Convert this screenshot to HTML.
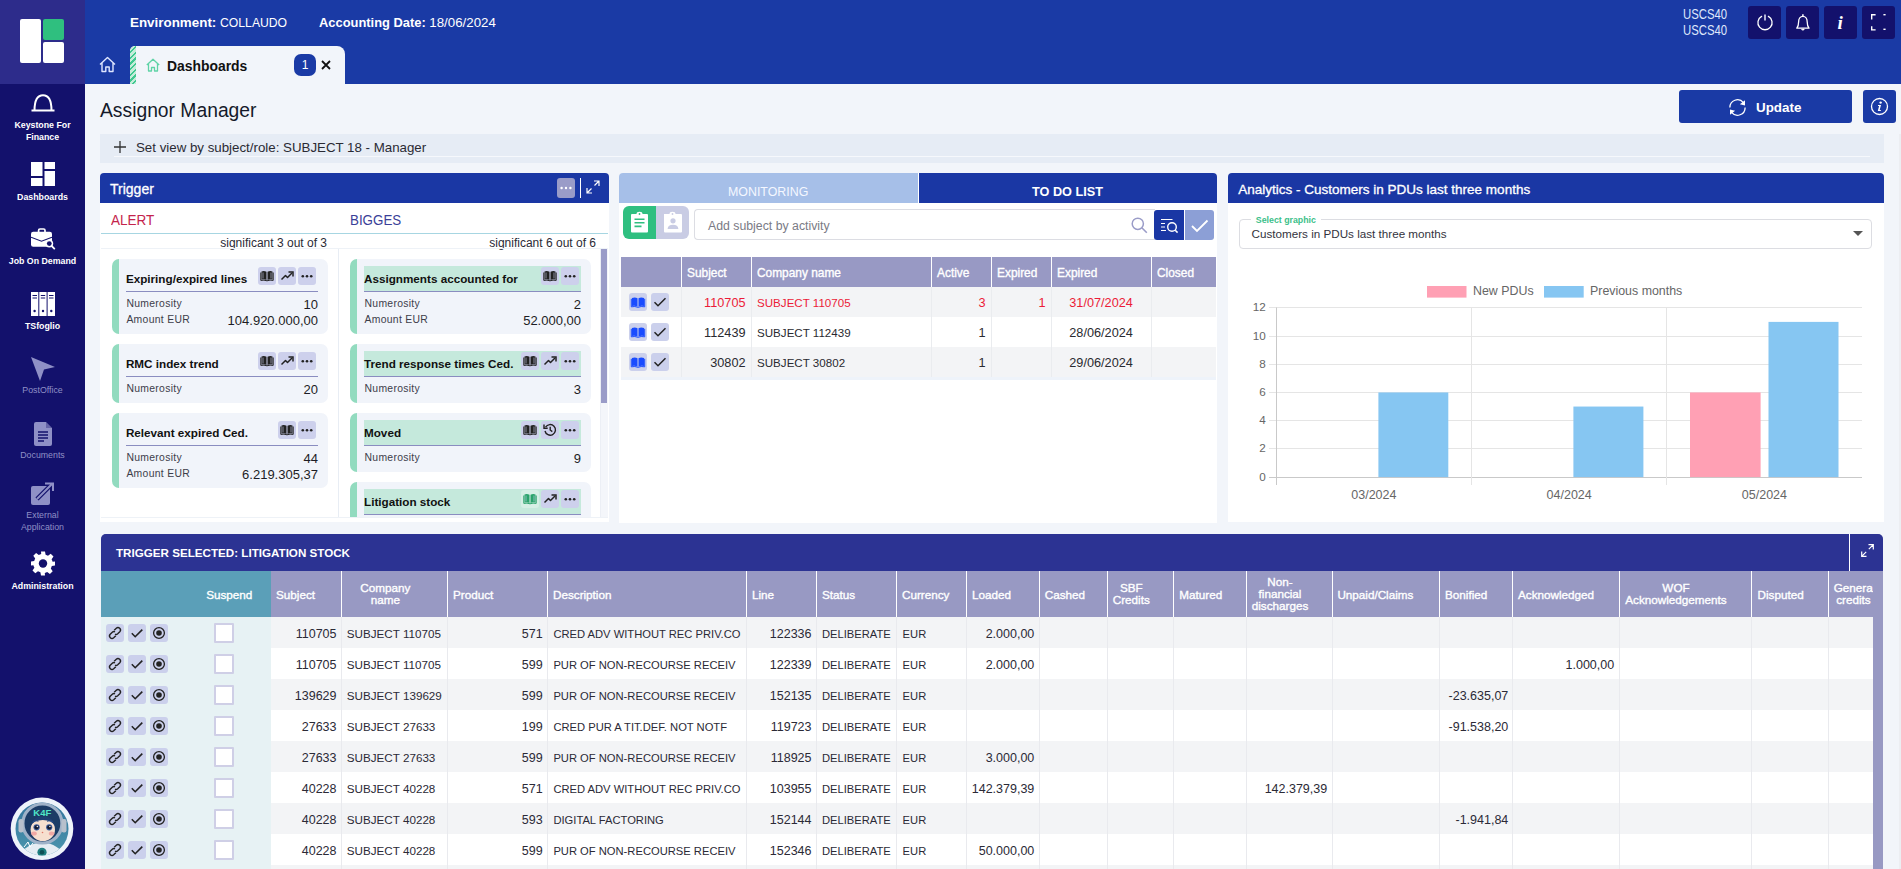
<!DOCTYPE html>
<html><head><meta charset="utf-8">
<style>
*{box-sizing:border-box;margin:0;padding:0}
html,body{width:1901px;height:869px;overflow:hidden;background:#f2f5fa;font-family:"Liberation Sans",sans-serif;color:#222}
.abs{position:absolute}
#sidebar{position:absolute;left:0;top:0;width:85px;height:869px;background:#13116c}
#logo{position:absolute;left:0;top:0;width:85px;height:84px;background:#2d2c8b}
#header{position:absolute;left:85px;top:0;width:1816px;height:84px;background:#1a3aa5}
.nav{position:absolute;left:0;width:85px;text-align:center;color:#fff;font-weight:bold;font-size:8.8px;line-height:11.5px}
.nav.dim{color:#8f90c6;font-weight:normal}
.nav svg{position:absolute;left:31px}
.hbtn{position:absolute;top:6px;width:33px;height:33px;background:#13116c;border-radius:3px}
.hbtn svg{position:absolute;left:0;top:0}
.t{position:absolute;white-space:nowrap}
.card{position:absolute;background:#f1f4fa;border-radius:7px;border-left:7px solid #92dbbf;overflow:hidden}
.ctitle{position:absolute;height:26.6px;border-bottom:1.5px solid #8a8dc0}
.ctitle .t{font-weight:bold;font-size:11.7px;color:#111}
.cbtn{position:absolute;top:1px;width:18px;height:18px;background:#cdd0ec;border-radius:3px}
.cbtn svg{position:absolute;left:0;top:0}
.clab{position:absolute;font-size:10.4px;letter-spacing:0.3px;color:#3d3d4a;white-space:nowrap}
.cval{position:absolute;font-size:13px;color:#1d1d25;white-space:nowrap}
.th{font-size:11.9px;color:#fff;font-weight:normal;-webkit-text-stroke:0.35px #fff}
.td{font-size:11.6px}
.rbtn{position:absolute;width:18px;height:18px;background:#cbd0ec;border-radius:3px}
.rbtn svg{position:absolute;left:0;top:0}
.bh{font-size:11.7px;color:#fff;font-weight:normal;-webkit-text-stroke:0.35px #fff}
.bd{font-size:11.2px;color:#2b2a36}
.bdn{font-size:12.5px;color:#2b2a36}
.bdc{font-size:11.67px;color:#2b2a36}
.tdn{font-size:12.7px}
.sig{font-size:12px;color:#2a2a35}

</style></head><body>
<div id="sidebar">
  <div id="logo">
    <div class="abs" style="left:20px;top:19px;width:21px;height:44px;background:#fff;border-radius:2px"></div>
    <div class="abs" style="left:43px;top:19px;width:21px;height:21px;background:#2fbf7f;border-radius:2px"></div>
    <div class="abs" style="left:43px;top:42px;width:21px;height:21px;background:#fff;border-radius:2px"></div>
  </div>

  <div class="nav" style="top:85px;height:60px">
    <svg style="top:9px" width="24" height="18" viewBox="0 0 24 18"><path d="M3.5 16.5 C3.5 6 7 1.2 12 1.2 C17 1.2 20.5 6 20.5 16.5" fill="none" stroke="#fff" stroke-width="2"/><rect x="0.5" y="15.5" width="23" height="2" fill="#fff"/></svg>
    <div class="t" style="left:0;width:85px;top:35px">Keystone For<br>Finance</div>
  </div>
  <div class="nav" style="top:160px;height:45px">
    <svg style="top:2px" width="24" height="24" viewBox="0 0 24 24"><rect x="0" y="0" width="11.5" height="14" fill="#fff"/><rect x="0" y="16" width="11.5" height="8" fill="#fff"/><rect x="13.5" y="0" width="10.5" height="7" fill="#fff"/><rect x="13.5" y="9" width="10.5" height="15" fill="#fff"/></svg>
    <div class="t" style="left:0;width:85px;top:31.5px">Dashboards</div>
  </div>
  <div class="nav" style="top:225px;height:45px">
    <svg style="top:3px" width="25" height="22" viewBox="0 0 25 22"><path d="M7.6 4.2 V2.4 Q7.6 1 9 1 H12.6 Q14 1 14 2.4 V4.2" fill="none" stroke="#fff" stroke-width="1.7"/><rect x="0" y="3.8" width="21" height="14.9" rx="2.2" fill="#fff"/><path d="M0 9.2 L10.5 13.2 L21 9.2" fill="none" stroke="#13116c" stroke-width="1.1"/><circle cx="18.3" cy="15.6" r="3.9" fill="#fff"/><circle cx="18.3" cy="15.6" r="2.4" fill="#13116c"/><path d="M20.8 18.1 L23.3 20.6" stroke="#fff" stroke-width="1.9" stroke-linecap="round"/></svg>
    <div class="t" style="left:0;width:85px;top:30.5px">Job On Demand</div>
  </div>
  <div class="nav" style="top:290px;height:45px">
    <svg style="top:2px" width="24" height="24" viewBox="0 0 24 24"><rect x="0" y="0" width="7.3" height="24" fill="#fff"/><rect x="8.3" y="0" width="7.3" height="24" fill="#fff"/><rect x="16.6" y="0" width="7.4" height="24" fill="#fff"/><g stroke="#13116c" stroke-width="1"><path d="M1.5 3.5H6M1.5 6H6M9.8 3.5H14.2M9.8 6H14.2M18 3.5H22.5M18 6H22.5"/></g><circle cx="3.6" cy="19" r="1.2" fill="#13116c"/><circle cx="12" cy="19" r="1.2" fill="#13116c"/><circle cx="20.3" cy="19" r="1.2" fill="#13116c"/></svg>
    <div class="t" style="left:0;width:85px;top:30.5px">TSfoglio</div>
  </div>
  <div class="nav dim" style="top:355px;height:45px">
    <svg style="top:2px" width="24" height="24" viewBox="0 0 24 24"><path d="M0 0 L24 10 L13 12.5 L9 24 Z" fill="#8f90c6"/></svg>
    <div class="t" style="left:0;width:85px;top:30px">PostOffice</div>
  </div>
  <div class="nav dim" style="top:420px;height:45px">
    <svg style="left:34px;top:2px" width="18" height="24" viewBox="0 0 18 24"><path d="M2 0 H12 L18 6 V22 Q18 24 16 24 H2 Q0 24 0 22 V2 Q0 0 2 0Z" fill="#8f90c6"/><path d="M12 0 V6 H18" fill="#13116c" opacity="0.35"/><g stroke="#13116c" stroke-width="1.3"><path d="M4 10H14M4 13H14M4 16H14M4 19H10"/></g></svg>
    <div class="t" style="left:0;width:85px;top:30px">Documents</div>
  </div>
  <div class="nav dim" style="top:479px;height:55px">
    <svg style="top:2px" width="24" height="24" viewBox="0 0 24 24"><rect x="0" y="5" width="19" height="19" rx="2" fill="#8f90c6"/><path d="M6 18 L21 3" stroke="#13116c" stroke-width="4.5"/><path d="M6 18 L21 3 M14 2.5 H22 V10" fill="none" stroke="#8f90c6" stroke-width="2"/></svg>
    <div class="t" style="left:0;width:85px;top:31px">External<br>Application</div>
  </div>
  <div class="nav" style="top:550px;height:45px">
    <svg style="top:1px" width="24" height="25" viewBox="0 0 24 24"><path fill="#fff" d="M10 0h4l.6 3.2a9 9 0 0 1 2.4 1l2.7-1.9 2.8 2.8-1.9 2.7a9 9 0 0 1 1 2.4L24 10v4l-3.2.6a9 9 0 0 1-1 2.4l1.9 2.7-2.8 2.8-2.7-1.9a9 9 0 0 1-2.4 1L14 24h-4l-.6-3.2a9 9 0 0 1-2.4-1l-2.7 1.9-2.8-2.8 1.9-2.7a9 9 0 0 1-1-2.4L0 14v-4l3.2-.6a9 9 0 0 1 1-2.4L2.3 4.3l2.8-2.8L7.8 3.4a9 9 0 0 1 2.4-1z"/><circle cx="12" cy="12" r="4.2" fill="#13116c"/></svg>
    <div class="t" style="left:0;width:85px;top:31px">Administration</div>
  </div>
  <div class="abs" style="left:8px;top:795px;width:68px;height:68px">
    <svg width="68" height="68" viewBox="0 0 68 68">
      <defs><clipPath id="avc"><circle cx="34" cy="34" r="26.5"/></clipPath>
      <linearGradient id="avbg" x1="0" y1="0" x2="0" y2="1"><stop offset="0" stop-color="#2f6f9a"/><stop offset="1" stop-color="#4f9bb0"/></linearGradient></defs>
      <circle cx="34" cy="33.8" r="31.3" fill="#eef3fa"/>
      <g clip-path="url(#avc)">
        <rect x="0" y="0" width="68" height="68" fill="url(#avbg)"/>
        <path d="M10 68 Q12 50 34 47 Q56 50 58 68Z" fill="#e6edf3"/>
        <circle cx="34" cy="57.3" r="4.6" fill="#1f7f80"/><circle cx="34" cy="57.3" r="2.3" fill="#0f4f55"/>
        <path d="M16 52 L20 47 L22 52 L25 48" fill="none" stroke="#fff" stroke-width="1"/>
      </g>
      <circle cx="34.4" cy="28.5" r="19.5" fill="#1c3c66" stroke="#9fb2c8" stroke-width="3.2"/>
      <rect x="10.5" y="24" width="5" height="13.5" rx="2.2" fill="#b7c0cc"/><rect x="53.5" y="24" width="5" height="13.5" rx="2.2" fill="#b7c0cc"/>
      <ellipse cx="34.8" cy="34.5" rx="12.2" ry="11.6" fill="#f6dfcf"/>
      <path d="M22.6 31 Q24 21.5 34.8 21.5 Q45.6 21.5 47 31 Q44 25 34.8 25 Q25.6 25 22.6 31Z" fill="#1f3f72"/>
      <path d="M25 27 Q27.5 25 30.5 26.2 M39 26.2 Q42 25 44.5 27" fill="none" stroke="#2a4f8a" stroke-width="1.2"/>
      <circle cx="28.6" cy="32.3" r="3.1" fill="#3a5a9a"/><circle cx="28.6" cy="32.3" r="2.1" fill="#151a2e"/><circle cx="29.3" cy="31.5" r="0.7" fill="#fff"/>
      <circle cx="41.2" cy="32.3" r="3.1" fill="#3a5a9a"/><circle cx="41.2" cy="32.3" r="2.1" fill="#151a2e"/><circle cx="41.9" cy="31.5" r="0.7" fill="#fff"/>
      <ellipse cx="26" cy="38.5" rx="2.8" ry="2" fill="#f0a8a4"/><ellipse cx="43.6" cy="38.5" rx="2.8" ry="2" fill="#f0a8a4"/>
      <circle cx="34.5" cy="37.5" r="0.8" fill="#e07a6a"/>
      <text x="34.3" y="21" text-anchor="middle" font-family="Liberation Sans" font-weight="bold" font-size="9.5" fill="#4fe6c6">K4F</text>
    </svg>
  </div>
</div>
<div id="header">
  <div class="t" style="left:45px;top:15px;color:#fff;font-size:13.4px"><b>Environment:</b> <span style="font-size:12.2px">COLLAUDO</span></div>
  <div class="t" style="left:234px;top:15px;color:#fff;font-size:12.9px"><b>Accounting Date:</b> <span style="font-size:13.3px">18/06/2024</span></div>
  <div class="t" style="left:1597.5px;top:6px;color:#dfe7fb;font-size:14px;line-height:16.1px;transform:scaleX(0.81);transform-origin:0 0">USCS40<br>USCS40</div>
  <div class="hbtn" style="left:1663px"><svg width="33" height="33" viewBox="0 0 33 33"><path d="M13.6 10.4 A7.1 7.1 0 1 0 20.4 10.4" fill="none" stroke="#fff" stroke-width="1.3" stroke-linecap="round"/><path d="M17 8.4 V14.6" stroke="#dcdff0" stroke-width="1.6"/></svg></div>
  <div class="hbtn" style="left:1701px"><svg width="33" height="33" viewBox="0 0 33 33"><path d="M10.8 22.2 C12.2 20.6 12.6 18.5 12.6 16 C12.6 12.8 14.3 10.3 16.9 10.3 C19.5 10.3 21.2 12.8 21.2 16 C21.2 18.5 21.6 20.6 23 22.2 Z" fill="none" stroke="#fff" stroke-width="1.3" stroke-linejoin="round"/><path d="M16.9 8.2 V10.3" stroke="#fff" stroke-width="1.5"/><path d="M15.6 23 Q16.9 24.6 18.2 23" fill="none" stroke="#fff" stroke-width="1.2"/></svg></div>
  <div class="hbtn" style="left:1739px"><svg width="33" height="33" viewBox="0 0 33 33"><text x="16.2" y="23.3" text-anchor="middle" font-family="Liberation Serif" font-style="italic" font-weight="bold" font-size="19" fill="#fff">i</text></svg></div>
  <div class="hbtn" style="left:1777px"><svg width="33" height="33" viewBox="0 0 33 33"><g fill="none" stroke="#fff" stroke-width="1.4"><path d="M9.7 13.4 V8.7 H13.6"/><path d="M9.7 20.2 V23.9 H13.6"/><path d="M21.4 8.7 H23.6"/><path d="M21.4 23.3 H23.6"/></g></svg></div>
  <div class="abs" style="left:0;top:46px;width:45px;height:38px">
    <svg style="position:absolute;left:14.3px;top:10.3px" width="17" height="17" viewBox="0 0 17 17"><path d="M1 8.5 L8.5 1.5 L16 8.5 M3 7 V15.5 H6.8 V11 H10.2 V15.5 H14 V7" fill="none" stroke="#dfe6ff" stroke-width="1.4" stroke-linejoin="round"/></svg>
  </div>
  <div class="abs" style="left:45px;top:46px;width:215px;height:38px;background:#f2f5fa;border-radius:5px 8px 0 0;overflow:hidden">
    <div class="abs" style="left:0;top:0;width:6px;height:38px;background:repeating-linear-gradient(135deg,#3fc890 0 1.6px,#c4ecd9 1.6px 4px)"></div>
    <svg style="position:absolute;left:16px;top:12px" width="14" height="14" viewBox="0 0 14 14"><path d="M0.8 7 L7 1.2 L13.2 7 M2.5 5.8 V13 H5.5 V9.5 H8.5 V13 H11.5 V5.8" fill="none" stroke="#5fd3a6" stroke-width="1.3" stroke-linejoin="round"/></svg>
    <div class="t" style="left:37px;top:12px;font-weight:bold;font-size:13.9px;color:#111">Dashboards</div>
    <div class="abs" style="left:164px;top:8px;width:22px;height:22px;border-radius:7px;background:#1a3aa5;color:#fff;font-size:12px;text-align:center;line-height:22px">1</div>
    <svg style="position:absolute;left:191px;top:14px" width="10" height="10" viewBox="0 0 10 10"><path d="M1 1 L9 9 M9 1 L1 9" stroke="#111" stroke-width="1.8"/></svg>
  </div>
</div>

<div class="t" style="left:100px;top:100px;font-size:19.3px;color:#151a2a">Assignor Manager</div>
<div class="abs" style="left:1679px;top:90px;width:173px;height:33px;background:#1a3aa5;border-radius:3px">
  <svg style="position:absolute;left:50px;top:8.5px" width="17" height="17" viewBox="0 0 17 17"><path d="M0.9 8.5 A7.6 7.6 0 0 1 14.4 3.6" fill="none" stroke="#fff" stroke-width="1.3"/><path d="M16.1 8.5 A7.6 7.6 0 0 1 2.6 13.4" fill="none" stroke="#fff" stroke-width="1.3"/><path d="M16 1.2 L16 6.4 L10.9 5.2Z" fill="#fff"/><path d="M1 15.8 L1 10.6 L6.1 11.8Z" fill="#fff"/></svg>
  <div class="t" style="left:77px;top:9.5px;color:#fff;font-weight:bold;font-size:13.4px">Update</div>
</div>
<div class="abs" style="left:1863px;top:90px;width:33px;height:33px;background:#1a3aa5;border-radius:3px">
  <svg width="33" height="33" viewBox="0 0 33 33"><circle cx="16.5" cy="16.5" r="8" fill="none" stroke="#fff" stroke-width="1.3"/><circle cx="17.6" cy="12.6" r="1.2" fill="#fff"/><path d="M15 15 H18 L16.7 20 H18 L17.7 21 H14.8 L16.1 16 H15 Z" fill="#fff"/></svg>
</div>
<div class="abs" style="left:100px;top:134px;width:1784px;height:29px;background:#e6ecf5">
  <svg style="position:absolute;left:14px;top:7px" width="12" height="12" viewBox="0 0 12 12"><path d="M6 0 V12 M0 6 H12" stroke="#333" stroke-width="1.3"/></svg>
  <div class="t" style="left:36px;top:6px;font-size:13.3px;color:#2a2a33">Set view by subject/role: SUBJECT 18 - Manager</div>
  <div class="abs" style="left:14px;top:22px;width:1756px;height:1px;background:#f6f8fc"></div>
</div>
<div class="abs" style="left:1899px;top:134px;width:2px;height:735px;background:#eceef2"></div>
<!--TRIGGER-->
<div class="abs" style="left:100px;top:173px;width:509px;height:349px;background:#fff;border-radius:4px 4px 0 0;overflow:hidden">
<div class="abs" style="left:0;top:0;width:509px;height:30px;background:#1a37a4"></div>
<div class="t" style="left:10px;top:8px;color:#fff;font-size:14px;-webkit-text-stroke:0.3px #fff">Trigger</div>
<div class="abs" style="left:457px;top:5px;width:18px;height:20px;background:#9a9cc8;border-radius:3px"><svg width="18" height="20" viewBox="0 0 18 20"><circle cx="4.6" cy="10" r="1.2" fill="#fff"/><circle cx="9" cy="10" r="1.2" fill="#fff"/><circle cx="13.4" cy="10" r="1.2" fill="#fff"/></svg></div>
<div class="abs" style="left:480px;top:5px;width:1.3px;height:20px;background:#fff"></div>
<svg style="position:absolute;left:486px;top:7px" width="14" height="14" viewBox="0 0 14 14"><path d="M8 1 H13 V6 M13 1 L8.5 5.5 M6 13 H1 V8 M1 13 L5.5 8.5" fill="none" stroke="#fff" stroke-width="1.2"/></svg>
<div class="t" style="left:10.5px;top:38px;color:#c4234c;font-size:15px;transform:scaleX(0.9);transform-origin:0 0">ALERT</div>
<div class="t" style="left:250px;top:38px;color:#3a3f98;font-size:15px;transform:scaleX(0.89);transform-origin:0 0">BIGGES</div>
<div class="abs" style="left:1px;top:60px;width:507px;height:1px;background:#a7d6e2"></div>
<div class="t sig" style="right:282px;top:63px">significant 3 out of 3</div>
<div class="t sig" style="right:13px;top:63px">significant 6 out of 6</div>
<div class="abs" style="left:1px;top:75px;width:507px;height:1px;background:#eef2f7"></div>
<div class="abs" style="left:238px;top:76px;width:1px;height:268px;background:#e8edf4"></div>
<div class="abs" style="left:500px;top:76px;width:8px;height:268px;background:#f4f6fa;border-left:1px solid #eceff5"></div>
<div class="abs" style="left:501px;top:76px;width:6px;height:154px;background:#9a9cc8"></div>
<div class="abs" style="left:0;top:344px;width:509px;height:5px;background:#fff"></div>
<div class="abs" style="left:1px;top:344px;width:507px;height:1px;background:#eef2f7"></div>
<div class="abs" style="left:0;top:76px;width:500px;height:268px;overflow:hidden">
<div class="card" style="left:11.9px;top:9.600000000000023px;width:216.1px;height:75.2px"><div class="ctitle" style="left:7px;top:7px;width:192.1px"><span class="t" style="left:0;top:6.2px">Expiring/expired lines</span><div class="cbtn" style="left:172.1px"><svg width="18" height="17" viewBox="0 0 18 17"><circle cx="4.8" cy="9.2" r="1.3" fill="#222"/><circle cx="9" cy="9.2" r="1.3" fill="#222"/><circle cx="13.2" cy="9.2" r="1.3" fill="#222"/></svg></div><div class="cbtn" style="left:152.1px"><svg width="18" height="17" viewBox="0 0 18 17"><path d="M3.5 12.5 L7.5 8.5 L9.5 10.5 L14 6" fill="none" stroke="#222" stroke-width="1.5" stroke-linejoin="round"/><path d="M10.5 5 H15 V9.5" fill="none" stroke="#222" stroke-width="1.5"/></svg></div><div class="cbtn" style="left:132.1px"><svg width="18" height="17" viewBox="0 0 18 17"><path d="M3.5 4.5 Q6 3.6 8.5 4.8 V13 Q6 11.8 3.5 12.6Z M9.5 4.8 Q12 3.6 14.5 4.5 V12.6 Q12 11.8 9.5 13Z" fill="#222"/><path d="M2.8 5.5 V13.4 Q6 12.6 9 13.8 Q12 12.6 15.2 13.4 V5.5" fill="none" stroke="#222" stroke-width="1"/><path d="M5 5.5V11.5M13 5.5V11.5" stroke="#cdd0ec" stroke-width="0.6"/></svg></div></div><div class="clab" style="left:7.5px;top:39.7px">Numerosity</div><div class="cval" style="right:10px;top:38px">10</div><div class="clab" style="left:7.5px;top:55.7px">Amount EUR</div><div class="cval" style="right:10px;top:54px">104.920.000,00</div></div>
<div class="card" style="left:11.9px;top:94.80000000000001px;width:216.1px;height:59px"><div class="ctitle" style="left:7px;top:7px;width:192.1px"><span class="t" style="left:0;top:6.2px">RMC index trend</span><div class="cbtn" style="left:172.1px"><svg width="18" height="17" viewBox="0 0 18 17"><circle cx="4.8" cy="9.2" r="1.3" fill="#222"/><circle cx="9" cy="9.2" r="1.3" fill="#222"/><circle cx="13.2" cy="9.2" r="1.3" fill="#222"/></svg></div><div class="cbtn" style="left:152.1px"><svg width="18" height="17" viewBox="0 0 18 17"><path d="M3.5 12.5 L7.5 8.5 L9.5 10.5 L14 6" fill="none" stroke="#222" stroke-width="1.5" stroke-linejoin="round"/><path d="M10.5 5 H15 V9.5" fill="none" stroke="#222" stroke-width="1.5"/></svg></div><div class="cbtn" style="left:132.1px"><svg width="18" height="17" viewBox="0 0 18 17"><path d="M3.5 4.5 Q6 3.6 8.5 4.8 V13 Q6 11.8 3.5 12.6Z M9.5 4.8 Q12 3.6 14.5 4.5 V12.6 Q12 11.8 9.5 13Z" fill="#222"/><path d="M2.8 5.5 V13.4 Q6 12.6 9 13.8 Q12 12.6 15.2 13.4 V5.5" fill="none" stroke="#222" stroke-width="1"/><path d="M5 5.5V11.5M13 5.5V11.5" stroke="#cdd0ec" stroke-width="0.6"/></svg></div></div><div class="clab" style="left:7.5px;top:39.7px">Numerosity</div><div class="cval" style="right:10px;top:38px">20</div></div>
<div class="card" style="left:11.9px;top:163.8px;width:216.1px;height:75.2px"><div class="ctitle" style="left:7px;top:7px;width:192.1px"><span class="t" style="left:0;top:6.2px">Relevant expired Ced.</span><div class="cbtn" style="left:172.1px"><svg width="18" height="17" viewBox="0 0 18 17"><circle cx="4.8" cy="9.2" r="1.3" fill="#222"/><circle cx="9" cy="9.2" r="1.3" fill="#222"/><circle cx="13.2" cy="9.2" r="1.3" fill="#222"/></svg></div><div class="cbtn" style="left:152.1px"><svg width="18" height="17" viewBox="0 0 18 17"><path d="M3.5 4.5 Q6 3.6 8.5 4.8 V13 Q6 11.8 3.5 12.6Z M9.5 4.8 Q12 3.6 14.5 4.5 V12.6 Q12 11.8 9.5 13Z" fill="#222"/><path d="M2.8 5.5 V13.4 Q6 12.6 9 13.8 Q12 12.6 15.2 13.4 V5.5" fill="none" stroke="#222" stroke-width="1"/><path d="M5 5.5V11.5M13 5.5V11.5" stroke="#cdd0ec" stroke-width="0.6"/></svg></div></div><div class="clab" style="left:7.5px;top:39.7px">Numerosity</div><div class="cval" style="right:10px;top:38px">44</div><div class="clab" style="left:7.5px;top:55.7px">Amount EUR</div><div class="cval" style="right:10px;top:54px">6.219.305,37</div></div>
<div class="card" style="left:250px;top:9.600000000000023px;width:241px;height:75.2px"><div class="ctitle" style="background:#c5e9dc;left:7px;top:7px;width:217px"><span class="t" style="left:0;top:6.2px">Assignments accounted for</span><div class="cbtn" style="left:197px"><svg width="18" height="17" viewBox="0 0 18 17"><circle cx="4.8" cy="9.2" r="1.3" fill="#222"/><circle cx="9" cy="9.2" r="1.3" fill="#222"/><circle cx="13.2" cy="9.2" r="1.3" fill="#222"/></svg></div><div class="cbtn" style="left:177px"><svg width="18" height="17" viewBox="0 0 18 17"><path d="M3.5 4.5 Q6 3.6 8.5 4.8 V13 Q6 11.8 3.5 12.6Z M9.5 4.8 Q12 3.6 14.5 4.5 V12.6 Q12 11.8 9.5 13Z" fill="#222"/><path d="M2.8 5.5 V13.4 Q6 12.6 9 13.8 Q12 12.6 15.2 13.4 V5.5" fill="none" stroke="#222" stroke-width="1"/><path d="M5 5.5V11.5M13 5.5V11.5" stroke="#cdd0ec" stroke-width="0.6"/></svg></div></div><div class="clab" style="left:7.5px;top:39.7px">Numerosity</div><div class="cval" style="right:10px;top:38px">2</div><div class="clab" style="left:7.5px;top:55.7px">Amount EUR</div><div class="cval" style="right:10px;top:54px">52.000,00</div></div>
<div class="card" style="left:250px;top:94.80000000000001px;width:241px;height:59px"><div class="ctitle" style="background:#c5e9dc;left:7px;top:7px;width:217px"><span class="t" style="left:0;top:6.2px">Trend response times Ced.</span><div class="cbtn" style="left:197px"><svg width="18" height="17" viewBox="0 0 18 17"><circle cx="4.8" cy="9.2" r="1.3" fill="#222"/><circle cx="9" cy="9.2" r="1.3" fill="#222"/><circle cx="13.2" cy="9.2" r="1.3" fill="#222"/></svg></div><div class="cbtn" style="left:177px"><svg width="18" height="17" viewBox="0 0 18 17"><path d="M3.5 12.5 L7.5 8.5 L9.5 10.5 L14 6" fill="none" stroke="#222" stroke-width="1.5" stroke-linejoin="round"/><path d="M10.5 5 H15 V9.5" fill="none" stroke="#222" stroke-width="1.5"/></svg></div><div class="cbtn" style="left:157px"><svg width="18" height="17" viewBox="0 0 18 17"><path d="M3.5 4.5 Q6 3.6 8.5 4.8 V13 Q6 11.8 3.5 12.6Z M9.5 4.8 Q12 3.6 14.5 4.5 V12.6 Q12 11.8 9.5 13Z" fill="#222"/><path d="M2.8 5.5 V13.4 Q6 12.6 9 13.8 Q12 12.6 15.2 13.4 V5.5" fill="none" stroke="#222" stroke-width="1"/><path d="M5 5.5V11.5M13 5.5V11.5" stroke="#cdd0ec" stroke-width="0.6"/></svg></div></div><div class="clab" style="left:7.5px;top:39.7px">Numerosity</div><div class="cval" style="right:10px;top:38px">3</div></div>
<div class="card" style="left:250px;top:163.8px;width:241px;height:59px"><div class="ctitle" style="background:#c5e9dc;left:7px;top:7px;width:217px"><span class="t" style="left:0;top:6.2px">Moved</span><div class="cbtn" style="left:197px"><svg width="18" height="17" viewBox="0 0 18 17"><circle cx="4.8" cy="9.2" r="1.3" fill="#222"/><circle cx="9" cy="9.2" r="1.3" fill="#222"/><circle cx="13.2" cy="9.2" r="1.3" fill="#222"/></svg></div><div class="cbtn" style="left:177px"><svg width="18" height="17" viewBox="0 0 18 17"><path d="M4.6 6.2 A5.3 5.3 0 1 1 4 10" fill="none" stroke="#222" stroke-width="1.4"/><path d="M3 3.5 V7.2 H6.7" fill="none" stroke="#222" stroke-width="1.4"/><path d="M9.2 5.8 V9 L11.3 10.6" fill="none" stroke="#222" stroke-width="1.4"/></svg></div><div class="cbtn" style="left:157px"><svg width="18" height="17" viewBox="0 0 18 17"><path d="M3.5 4.5 Q6 3.6 8.5 4.8 V13 Q6 11.8 3.5 12.6Z M9.5 4.8 Q12 3.6 14.5 4.5 V12.6 Q12 11.8 9.5 13Z" fill="#222"/><path d="M2.8 5.5 V13.4 Q6 12.6 9 13.8 Q12 12.6 15.2 13.4 V5.5" fill="none" stroke="#222" stroke-width="1"/><path d="M5 5.5V11.5M13 5.5V11.5" stroke="#cdd0ec" stroke-width="0.6"/></svg></div></div><div class="clab" style="left:7.5px;top:39.7px">Numerosity</div><div class="cval" style="right:10px;top:38px">9</div></div>
<div class="card" style="left:250px;top:232.8px;width:241px;height:75.2px"><div class="ctitle" style="background:#c5e9dc;left:7px;top:7px;width:217px"><span class="t" style="left:0;top:6.2px">Litigation stock</span><div class="cbtn" style="left:197px"><svg width="18" height="17" viewBox="0 0 18 17"><circle cx="4.8" cy="9.2" r="1.3" fill="#222"/><circle cx="9" cy="9.2" r="1.3" fill="#222"/><circle cx="13.2" cy="9.2" r="1.3" fill="#222"/></svg></div><div class="cbtn" style="left:177px"><svg width="18" height="17" viewBox="0 0 18 17"><path d="M3.5 12.5 L7.5 8.5 L9.5 10.5 L14 6" fill="none" stroke="#222" stroke-width="1.5" stroke-linejoin="round"/><path d="M10.5 5 H15 V9.5" fill="none" stroke="#222" stroke-width="1.5"/></svg></div><div class="cbtn" style="left:157px;background:#d6efe5"><svg width="18" height="17" viewBox="0 0 18 17"><path d="M3.5 4.5 Q6 3.6 8.5 4.8 V13 Q6 11.8 3.5 12.6Z M9.5 4.8 Q12 3.6 14.5 4.5 V12.6 Q12 11.8 9.5 13Z" fill="#2aa36b"/><path d="M2.8 5.5 V13.4 Q6 12.6 9 13.8 Q12 12.6 15.2 13.4 V5.5" fill="none" stroke="#2aa36b" stroke-width="1"/><path d="M5 5.5V11.5M13 5.5V11.5" stroke="#cdd0ec" stroke-width="0.6"/></svg></div></div><div class="clab" style="left:7.5px;top:39.7px">Numerosity</div><div class="cval" style="right:10px;top:38px">12</div><div class="clab" style="left:7.5px;top:55.7px">Amount EUR</div><div class="cval" style="right:10px;top:54px">0,00</div></div>
</div>
</div>
<!--/TRIGGER-->
<!--TODO-->
<div class="abs" style="left:619px;top:173px;width:598px;height:349.5px;background:#fff;border-radius:4px 4px 0 0;overflow:hidden">
<div class="abs" style="left:0;top:0;width:299px;height:30px;background:#a6bfe8"></div>
<div class="abs" style="left:299px;top:0;width:1px;height:30px;background:#fff"></div>
<div class="abs" style="left:300px;top:0;width:298px;height:30px;background:#1a37a4"></div>
<div class="t" style="left:109px;top:11.5px;color:#f4f7ff;font-size:12.4px">MONITORING</div>
<div class="t" style="left:413px;top:11.5px;color:#fff;font-weight:bold;font-size:12.7px">TO DO LIST</div>
<div class="abs" style="left:4px;top:33px;width:33px;height:32.5px;background:#2fbf80;border-radius:6px 0 0 6px"><svg width="33" height="33" viewBox="0 0 33 33"><path d="M9 8 H13.5 Q13.5 5.8 16.5 5.8 Q19.5 5.8 19.5 8 H24 Q25 8 25 9 V25.5 Q25 26.5 24 26.5 H9 Q8 26.5 8 25.5 V9 Q8 8 9 8Z" fill="#fff"/><circle cx="16.5" cy="8" r="0.9" fill="#2fbf80"/><path d="M11.5 13.2 H21.5 M11.5 16.8 H21.5 M11.5 20.4 H18.5" stroke="#2fbf80" stroke-width="1.6"/></svg></div>
<div class="abs" style="left:37px;top:33px;width:33px;height:32.5px;background:#c9cce4;border-radius:0 6px 6px 0"><svg width="33" height="33" viewBox="0 0 33 33"><path d="M8 8 H13.5 Q13.5 5.8 16.5 5.8 Q19.5 5.8 19.5 8 H25 Q26 8 26 9 V25.5 Q26 26.5 25 26.5 H9 Q8 26.5 8 25.5Z" fill="#fff"/><circle cx="16.5" cy="8" r="0.9" fill="#c9cce4"/><circle cx="17" cy="14.8" r="2.6" fill="#c9cce4"/><path d="M11.6 23 Q12 18.8 17 18.8 Q22 18.8 22.4 23Z" fill="#c9cce4"/></svg></div>
<div class="abs" style="left:74.8px;top:36.3px;width:461.2px;height:30.5px;border:1px solid #dcdde3;border-right:none;border-radius:4px 0 0 4px;background:#fff"></div>
<div class="t" style="left:89px;top:46px;color:#7a7b85;font-size:12.3px">Add subject by activity</div>
<svg style="position:absolute;left:512px;top:44px" width="17" height="17" viewBox="0 0 17 17"><circle cx="6.8" cy="6.8" r="5.6" fill="none" stroke="#9a9cc8" stroke-width="1.5"/><path d="M10.8 10.8 L15.8 15.8" stroke="#9a9cc8" stroke-width="1.6"/></svg>
<div class="abs" style="left:535px;top:37px;width:30px;height:30px;background:#1a37a4;border-radius:3px 0 0 3px"><svg width="30" height="30" viewBox="0 0 30 30"><path d="M7 9.5 H18.5 M7 13.5 H11 M7 17 H11 M7 20.5 H12" stroke="#fff" stroke-width="1.1"/><circle cx="18" cy="17" r="4.3" fill="none" stroke="#fff" stroke-width="1.4"/><path d="M21.2 20.2 L23.6 22.6" stroke="#fff" stroke-width="1.5"/></svg></div>
<div class="abs" style="left:565.5px;top:37px;width:29.5px;height:30px;background:#8c9fd6;border-radius:0 3px 3px 0"><svg width="30" height="30" viewBox="0 0 30 30"><path d="M7 16 L12 21 L22.5 10.5" fill="none" stroke="#fff" stroke-width="1.8"/></svg></div>
<div class="abs" style="left:2px;top:84px;width:595px;height:30px;background:#9899c4"></div>
<div class="abs" style="left:62px;top:84px;width:1px;height:30px;background:#fff"></div>
<div class="t th" style="left:68px;top:93px">Subject</div>
<div class="abs" style="left:132px;top:84px;width:1px;height:30px;background:#fff"></div>
<div class="t th" style="left:138px;top:93px">Company name</div>
<div class="abs" style="left:312px;top:84px;width:1px;height:30px;background:#fff"></div>
<div class="t th" style="left:318px;top:93px">Active</div>
<div class="abs" style="left:372px;top:84px;width:1px;height:30px;background:#fff"></div>
<div class="t th" style="left:378px;top:93px">Expired</div>
<div class="abs" style="left:432px;top:84px;width:1px;height:30px;background:#fff"></div>
<div class="t th" style="left:438px;top:93px">Expired</div>
<div class="abs" style="left:532px;top:84px;width:1px;height:30px;background:#fff"></div>
<div class="t th" style="left:538px;top:93px">Closed</div>
<div class="abs" style="left:2px;top:114px;width:595px;height:30px;background:#f3f4f6"></div>
<div class="abs" style="left:62px;top:114px;width:1px;height:30px;background:#eaecef"></div>
<div class="abs" style="left:132px;top:114px;width:1px;height:30px;background:#eaecef"></div>
<div class="abs" style="left:312px;top:114px;width:1px;height:30px;background:#eaecef"></div>
<div class="abs" style="left:372px;top:114px;width:1px;height:30px;background:#eaecef"></div>
<div class="abs" style="left:432px;top:114px;width:1px;height:30px;background:#eaecef"></div>
<div class="abs" style="left:532px;top:114px;width:1px;height:30px;background:#eaecef"></div>
<div class="rbtn" style="left:9.799999999999955px;top:120px"><svg width="18" height="18" viewBox="0 0 18 18"><path d="M3 5 Q6 4 8.5 5.2 V13.5 Q6 12.4 3 13Z M9.5 5.2 Q12 4 15 5 V13 Q12 12.4 9.5 13.5Z" fill="#1a4cff"/><path d="M2.3 5.8 V13.8 Q6 13 9 14.3 Q12 13 15.7 13.8 V5.8" fill="none" stroke="#1a4cff" stroke-width="1"/></svg></div>
<div class="rbtn" style="left:32px;top:120px"><svg width="18" height="18" viewBox="0 0 18 18"><path d="M3.5 9.2 L7 12.7 L14.5 5.2" fill="none" stroke="#222" stroke-width="1.5"/></svg></div>
<div class="t tdn" style="right:471.5px;top:122.5px;color:#ec1c38">110705</div>
<div class="t td" style="left:138px;top:123px;color:#ec1c38">SUBJECT 110705</div>
<div class="t tdn" style="right:231.5px;top:122.5px;color:#ec1c38">3</div>
<div class="t tdn" style="right:171.5px;top:122.5px;color:#ec1c38">1</div>
<div class="t tdn" style="left:450.29999999999995px;top:122.8px;color:#ec1c38">31/07/2024</div>
<div class="abs" style="left:2px;top:144px;width:595px;height:30px;background:#fff"></div>
<div class="abs" style="left:62px;top:144px;width:1px;height:30px;background:#eaecef"></div>
<div class="abs" style="left:132px;top:144px;width:1px;height:30px;background:#eaecef"></div>
<div class="abs" style="left:312px;top:144px;width:1px;height:30px;background:#eaecef"></div>
<div class="abs" style="left:372px;top:144px;width:1px;height:30px;background:#eaecef"></div>
<div class="abs" style="left:432px;top:144px;width:1px;height:30px;background:#eaecef"></div>
<div class="abs" style="left:532px;top:144px;width:1px;height:30px;background:#eaecef"></div>
<div class="rbtn" style="left:9.799999999999955px;top:150px"><svg width="18" height="18" viewBox="0 0 18 18"><path d="M3 5 Q6 4 8.5 5.2 V13.5 Q6 12.4 3 13Z M9.5 5.2 Q12 4 15 5 V13 Q12 12.4 9.5 13.5Z" fill="#1a4cff"/><path d="M2.3 5.8 V13.8 Q6 13 9 14.3 Q12 13 15.7 13.8 V5.8" fill="none" stroke="#1a4cff" stroke-width="1"/></svg></div>
<div class="rbtn" style="left:32px;top:150px"><svg width="18" height="18" viewBox="0 0 18 18"><path d="M3.5 9.2 L7 12.7 L14.5 5.2" fill="none" stroke="#222" stroke-width="1.5"/></svg></div>
<div class="t tdn" style="right:471.5px;top:152.5px;color:#2a2a30">112439</div>
<div class="t td" style="left:138px;top:153px;color:#2a2a30">SUBJECT 112439</div>
<div class="t tdn" style="right:231.5px;top:152.5px;color:#2a2a30">1</div>
<div class="t tdn" style="left:450.29999999999995px;top:152.8px;color:#2a2a30">28/06/2024</div>
<div class="abs" style="left:2px;top:174px;width:595px;height:30px;background:#f3f4f6"></div>
<div class="abs" style="left:62px;top:174px;width:1px;height:30px;background:#eaecef"></div>
<div class="abs" style="left:132px;top:174px;width:1px;height:30px;background:#eaecef"></div>
<div class="abs" style="left:312px;top:174px;width:1px;height:30px;background:#eaecef"></div>
<div class="abs" style="left:372px;top:174px;width:1px;height:30px;background:#eaecef"></div>
<div class="abs" style="left:432px;top:174px;width:1px;height:30px;background:#eaecef"></div>
<div class="abs" style="left:532px;top:174px;width:1px;height:30px;background:#eaecef"></div>
<div class="rbtn" style="left:9.799999999999955px;top:180px"><svg width="18" height="18" viewBox="0 0 18 18"><path d="M3 5 Q6 4 8.5 5.2 V13.5 Q6 12.4 3 13Z M9.5 5.2 Q12 4 15 5 V13 Q12 12.4 9.5 13.5Z" fill="#1a4cff"/><path d="M2.3 5.8 V13.8 Q6 13 9 14.3 Q12 13 15.7 13.8 V5.8" fill="none" stroke="#1a4cff" stroke-width="1"/></svg></div>
<div class="rbtn" style="left:32px;top:180px"><svg width="18" height="18" viewBox="0 0 18 18"><path d="M3.5 9.2 L7 12.7 L14.5 5.2" fill="none" stroke="#222" stroke-width="1.5"/></svg></div>
<div class="t tdn" style="right:471.5px;top:182.5px;color:#2a2a30">30802</div>
<div class="t td" style="left:138px;top:183px;color:#2a2a30">SUBJECT 30802</div>
<div class="t tdn" style="right:231.5px;top:182.5px;color:#2a2a30">1</div>
<div class="t tdn" style="left:450.29999999999995px;top:182.8px;color:#2a2a30">29/06/2024</div>
<div class="abs" style="left:2px;top:204px;width:595px;height:3px;background:#eef3fa"></div>
</div>
<!--/TODO-->
<!--CHART-->
<div class="abs" style="left:1228.3px;top:173px;width:655.7px;height:348.5px;background:#fff;border-radius:4px 4px 0 0;overflow:hidden">
<div class="abs" style="left:0;top:0;width:656px;height:30px;background:#1a37a4"></div>
<div class="t" style="left:10px;top:9px;color:#fff;font-size:13.5px;-webkit-text-stroke:0.3px #fff">Analytics - Customers in PDUs last three months</div>
</div>
<div class="abs" style="left:1239.4px;top:219.2px;width:633px;height:29.6px;border:1px solid #dcdde2;border-radius:4px"></div>
<div class="abs" style="left:1250.7px;top:215px;width:70px;height:8px;background:#fff"></div>
<div class="t" style="left:1255.8px;top:214.5px;color:#3cbf8a;font-weight:bold;font-size:8.8px">Select graphic</div>
<div class="t" style="left:1251.6px;top:226.5px;color:#33333d;font-size:11.66px">Customers in PDUs last three months</div>
<svg style="position:absolute;left:1852px;top:230px" width="12" height="7" viewBox="0 0 12 7"><path d="M1 1 H11 L6 6Z" fill="#555"/></svg>
<svg style="position:absolute;left:1240px;top:270px" width="640" height="240" viewBox="0 0 640 240" font-family="Liberation Sans" font-size="12"><rect x="187" y="16" width="39.5" height="11.6" fill="#ffa0b4" stroke="#ff6384" stroke-width="0"/><text x="233" y="25" fill="#666" font-size="12.4">New PDUs</text><rect x="304" y="16" width="39.7" height="11.6" fill="#86c6f2"/><text x="350" y="25" fill="#666" font-size="12.4">Previous months</text><line x1="29" y1="207.5" x2="622" y2="207.5" stroke="#c9c9c9" stroke-width="1"/><text x="25.700000000000045" y="210.70000000000002" fill="#666" text-anchor="end" font-size="11.7">0</text><line x1="29" y1="178.5" x2="622" y2="178.5" stroke="#e5e5e5" stroke-width="1"/><text x="25.700000000000045" y="182.48" fill="#666" text-anchor="end" font-size="11.7">2</text><line x1="29" y1="150.5" x2="622" y2="150.5" stroke="#e5e5e5" stroke-width="1"/><text x="25.700000000000045" y="154.26000000000002" fill="#666" text-anchor="end" font-size="11.7">4</text><line x1="29" y1="122.5" x2="622" y2="122.5" stroke="#e5e5e5" stroke-width="1"/><text x="25.700000000000045" y="126.04000000000005" fill="#666" text-anchor="end" font-size="11.7">6</text><line x1="29" y1="94.5" x2="622" y2="94.5" stroke="#e5e5e5" stroke-width="1"/><text x="25.700000000000045" y="97.82000000000002" fill="#666" text-anchor="end" font-size="11.7">8</text><line x1="29" y1="66.5" x2="622" y2="66.5" stroke="#e5e5e5" stroke-width="1"/><text x="25.700000000000045" y="69.6" fill="#666" text-anchor="end" font-size="11.7">10</text><line x1="29" y1="37.5" x2="622" y2="37.5" stroke="#e5e5e5" stroke-width="1"/><text x="25.700000000000045" y="41.38000000000003" fill="#666" text-anchor="end" font-size="11.7">12</text><line x1="36.5" y1="37.5" x2="36.5" y2="215" stroke="#c9c9c9" stroke-width="1"/><line x1="231.5" y1="37.5" x2="231.5" y2="215" stroke="#e5e5e5" stroke-width="1"/><line x1="426.5" y1="37.5" x2="426.5" y2="215" stroke="#e5e5e5" stroke-width="1"/><text x="133.8499999999999" y="229.2" fill="#666" text-anchor="middle" font-size="12.5">03/2024</text><text x="329.1500000000001" y="229.2" fill="#666" text-anchor="middle" font-size="12.5">04/2024</text><text x="524.4000000000001" y="229.2" fill="#666" text-anchor="middle" font-size="12.5">05/2024</text><rect x="138.4000000000001" y="122.44000000000005" width="69.89999999999986" height="84.65999999999997" fill="#86c6f2"/><rect x="333.4000000000001" y="136.55" width="70.0" height="70.55000000000001" fill="#86c6f2"/><rect x="450" y="122.44000000000005" width="70.59999999999991" height="84.65999999999997" fill="#ffa0b4"/><rect x="528.5" y="51.89000000000004" width="70.0" height="155.20999999999998" fill="#86c6f2"/></svg>
<!--/CHART-->
<!--BOTTOM-->
<div class="abs" style="left:101px;top:533.8px;width:1782px;height:335.20000000000005px;border-radius:5px 5px 0 0;overflow:hidden;background:#9899c3">
<div class="abs" style="left:0;top:0;width:1782px;height:37px;background:#2c3393"></div>
<div class="t" style="left:15px;top:12px;color:#fff;font-weight:bold;font-size:11.64px">TRIGGER SELECTED: LITIGATION STOCK</div>
<div class="abs" style="left:1748.1px;top:0;width:1.2px;height:37px;background:#fff"></div>
<svg style="position:absolute;left:1759.5px;top:10.700000000000045px" width="13" height="13" viewBox="0 0 13 13"><path d="M7.5 0.7 H12.3 V5.5 M12.3 0.7 L7.8 5.2 M5.5 12.3 H0.7 V7.5 M0.7 12.3 L5.2 7.8" fill="none" stroke="#fff" stroke-width="1.2"/></svg>
</div>
<div class="abs" style="left:101px;top:570.8px;width:170px;height:46.200000000000045px;background:#5b9fb8"></div>
<div class="t bh" style="left:206.2px;top:588.3px">Suspend</div>
<div class="abs" style="left:341px;top:570.8px;width:1px;height:46.200000000000045px;background:#fff"></div>
<div class="abs" style="left:447px;top:570.8px;width:1px;height:46.200000000000045px;background:#fff"></div>
<div class="abs" style="left:547px;top:570.8px;width:1px;height:46.200000000000045px;background:#fff"></div>
<div class="abs" style="left:746px;top:570.8px;width:1px;height:46.200000000000045px;background:#fff"></div>
<div class="abs" style="left:816px;top:570.8px;width:1px;height:46.200000000000045px;background:#fff"></div>
<div class="abs" style="left:896px;top:570.8px;width:1px;height:46.200000000000045px;background:#fff"></div>
<div class="abs" style="left:966px;top:570.8px;width:1px;height:46.200000000000045px;background:#fff"></div>
<div class="abs" style="left:1039px;top:570.8px;width:1px;height:46.200000000000045px;background:#fff"></div>
<div class="abs" style="left:1107px;top:570.8px;width:1px;height:46.200000000000045px;background:#fff"></div>
<div class="abs" style="left:1173px;top:570.8px;width:1px;height:46.200000000000045px;background:#fff"></div>
<div class="abs" style="left:1246px;top:570.8px;width:1px;height:46.200000000000045px;background:#fff"></div>
<div class="abs" style="left:1332px;top:570.8px;width:1px;height:46.200000000000045px;background:#fff"></div>
<div class="abs" style="left:1439px;top:570.8px;width:1px;height:46.200000000000045px;background:#fff"></div>
<div class="abs" style="left:1512px;top:570.8px;width:1px;height:46.200000000000045px;background:#fff"></div>
<div class="abs" style="left:1619px;top:570.8px;width:1px;height:46.200000000000045px;background:#fff"></div>
<div class="abs" style="left:1751px;top:570.8px;width:1px;height:46.200000000000045px;background:#fff"></div>
<div class="abs" style="left:1828px;top:570.8px;width:1px;height:46.200000000000045px;background:#fff"></div>
<div class="t bh" style="left:276px;top:587.6999999999999px">Subject</div>
<div class="t bh" style="left:453px;top:587.6999999999999px">Product</div>
<div class="t bh" style="left:553px;top:587.6999999999999px">Description</div>
<div class="t bh" style="left:752px;top:587.6999999999999px">Line</div>
<div class="t bh" style="left:822px;top:587.6999999999999px">Status</div>
<div class="t bh" style="left:902px;top:587.6999999999999px">Currency</div>
<div class="t bh" style="left:972px;top:587.6999999999999px">Loaded</div>
<div class="t bh" style="left:1044.7px;top:587.6999999999999px">Cashed</div>
<div class="t bh" style="left:1179.3px;top:587.6999999999999px">Matured</div>
<div class="t bh" style="left:1337.4px;top:587.6999999999999px">Unpaid/Claims</div>
<div class="t bh" style="left:1445px;top:587.6999999999999px">Bonified</div>
<div class="t bh" style="left:1518px;top:587.6999999999999px">Acknowledged</div>
<div class="t bh" style="left:1757.5px;top:587.6999999999999px">Disputed</div>
<div class="t bh" style="left:285.3px;width:200px;text-align:center;top:581.3px">Company</div>
<div class="t bh" style="left:285.3px;width:200px;text-align:center;top:593.3px">name</div>
<div class="t bh" style="left:1031.3px;width:200px;text-align:center;top:581.3px">SBF</div>
<div class="t bh" style="left:1031.3px;width:200px;text-align:center;top:593.3px">Credits</div>
<div class="t bh" style="left:1180px;width:200px;text-align:center;top:575.4px">Non-</div>
<div class="t bh" style="left:1180px;width:200px;text-align:center;top:587.4px">financial</div>
<div class="t bh" style="left:1180px;width:200px;text-align:center;top:599.4px">discharges</div>
<div class="t bh" style="left:1576px;width:200px;text-align:center;top:581.3px">WOF</div>
<div class="t bh" style="left:1576px;width:200px;text-align:center;top:593.3px">Acknowledgements</div>
<div class="abs" style="left:1829.6px;top:570.8px;width:43.4px;height:46px;overflow:hidden"><div class="t bh" style="left:4.2px;top:10.5px">General</div><div class="t bh" style="left:6.6px;top:22.5px">credits</div></div>
<div class="abs" style="left:271px;top:617px;width:1602px;height:31px;background:#f3f4f6"></div>
<div class="abs" style="left:101px;top:617px;width:170px;height:31px;background:#e7f2f4"></div>
<div class="abs" style="left:101px;top:648px;width:170px;height:1px;background:#fff"></div>
<div class="abs" style="left:341px;top:617px;width:1px;height:31px;background:#e9eaee"></div>
<div class="abs" style="left:447px;top:617px;width:1px;height:31px;background:#e9eaee"></div>
<div class="abs" style="left:547px;top:617px;width:1px;height:31px;background:#e9eaee"></div>
<div class="abs" style="left:746px;top:617px;width:1px;height:31px;background:#e9eaee"></div>
<div class="abs" style="left:816px;top:617px;width:1px;height:31px;background:#e9eaee"></div>
<div class="abs" style="left:896px;top:617px;width:1px;height:31px;background:#e9eaee"></div>
<div class="abs" style="left:966px;top:617px;width:1px;height:31px;background:#e9eaee"></div>
<div class="abs" style="left:1039px;top:617px;width:1px;height:31px;background:#e9eaee"></div>
<div class="abs" style="left:1107px;top:617px;width:1px;height:31px;background:#e9eaee"></div>
<div class="abs" style="left:1173px;top:617px;width:1px;height:31px;background:#e9eaee"></div>
<div class="abs" style="left:1246px;top:617px;width:1px;height:31px;background:#e9eaee"></div>
<div class="abs" style="left:1332px;top:617px;width:1px;height:31px;background:#e9eaee"></div>
<div class="abs" style="left:1439px;top:617px;width:1px;height:31px;background:#e9eaee"></div>
<div class="abs" style="left:1512px;top:617px;width:1px;height:31px;background:#e9eaee"></div>
<div class="abs" style="left:1619px;top:617px;width:1px;height:31px;background:#e9eaee"></div>
<div class="abs" style="left:1751px;top:617px;width:1px;height:31px;background:#e9eaee"></div>
<div class="abs" style="left:1828px;top:617px;width:1px;height:31px;background:#e9eaee"></div>
<div class="rbtn" style="left:106px;top:624.2px"><svg width="18" height="18" viewBox="0 0 18 18"><g fill="none" stroke="#222" stroke-width="1.4"><path d="M8.2 6.3 L10.3 4.2 Q12 2.6 13.7 4.3 Q15.4 6 13.8 7.7 L11.7 9.8 Q10.4 11 9 10.2"/><path d="M9.8 11.7 L7.7 13.8 Q6 15.4 4.3 13.7 Q2.6 12 4.2 10.3 L6.3 8.2 Q7.6 7 9 7.8"/></g></svg></div>
<div class="rbtn" style="left:128px;top:624.2px"><svg width="18" height="18" viewBox="0 0 18 18"><path d="M3.8 9.3 L7.2 12.7 L14.3 5.6" fill="none" stroke="#222" stroke-width="1.6"/></svg></div>
<div class="rbtn" style="left:150px;top:624.2px"><svg width="18" height="18" viewBox="0 0 18 18"><circle cx="9" cy="9" r="5.4" fill="none" stroke="#222" stroke-width="1.3"/><circle cx="9" cy="9" r="2.8" fill="#222"/></svg></div>
<div class="abs" style="left:214px;top:623.2px;width:19.8px;height:19.6px;background:#fff;border:2px solid #cfcfe6;border-radius:1px"></div>
<div class="t bdn" style="right:1564.5px;top:627.3px">110705</div>
<div class="t bdc" style="left:346.8px;top:626.5999999999999px">SUBJECT 110705</div>
<div class="t bdn" style="right:1358.3px;top:627.3px">571</div>
<div class="t bd" style="left:553.4px;top:627.8px">CRED ADV WITHOUT REC PRIV.CO</div>
<div class="t bdn" style="right:1089.5px;top:627.3px">122336</div>
<div class="t bd" style="left:822px;top:627.8px">DELIBERATE</div>
<div class="t bd" style="left:902.6px;top:627.8px">EUR</div>
<div class="t bdn" style="right:866.7px;top:627.3px">2.000,00</div>
<div class="abs" style="left:271px;top:648px;width:1602px;height:31px;background:#fff"></div>
<div class="abs" style="left:101px;top:648px;width:170px;height:31px;background:#e7f2f4"></div>
<div class="abs" style="left:101px;top:679px;width:170px;height:1px;background:#fff"></div>
<div class="abs" style="left:341px;top:648px;width:1px;height:31px;background:#e9eaee"></div>
<div class="abs" style="left:447px;top:648px;width:1px;height:31px;background:#e9eaee"></div>
<div class="abs" style="left:547px;top:648px;width:1px;height:31px;background:#e9eaee"></div>
<div class="abs" style="left:746px;top:648px;width:1px;height:31px;background:#e9eaee"></div>
<div class="abs" style="left:816px;top:648px;width:1px;height:31px;background:#e9eaee"></div>
<div class="abs" style="left:896px;top:648px;width:1px;height:31px;background:#e9eaee"></div>
<div class="abs" style="left:966px;top:648px;width:1px;height:31px;background:#e9eaee"></div>
<div class="abs" style="left:1039px;top:648px;width:1px;height:31px;background:#e9eaee"></div>
<div class="abs" style="left:1107px;top:648px;width:1px;height:31px;background:#e9eaee"></div>
<div class="abs" style="left:1173px;top:648px;width:1px;height:31px;background:#e9eaee"></div>
<div class="abs" style="left:1246px;top:648px;width:1px;height:31px;background:#e9eaee"></div>
<div class="abs" style="left:1332px;top:648px;width:1px;height:31px;background:#e9eaee"></div>
<div class="abs" style="left:1439px;top:648px;width:1px;height:31px;background:#e9eaee"></div>
<div class="abs" style="left:1512px;top:648px;width:1px;height:31px;background:#e9eaee"></div>
<div class="abs" style="left:1619px;top:648px;width:1px;height:31px;background:#e9eaee"></div>
<div class="abs" style="left:1751px;top:648px;width:1px;height:31px;background:#e9eaee"></div>
<div class="abs" style="left:1828px;top:648px;width:1px;height:31px;background:#e9eaee"></div>
<div class="rbtn" style="left:106px;top:655.2px"><svg width="18" height="18" viewBox="0 0 18 18"><g fill="none" stroke="#222" stroke-width="1.4"><path d="M8.2 6.3 L10.3 4.2 Q12 2.6 13.7 4.3 Q15.4 6 13.8 7.7 L11.7 9.8 Q10.4 11 9 10.2"/><path d="M9.8 11.7 L7.7 13.8 Q6 15.4 4.3 13.7 Q2.6 12 4.2 10.3 L6.3 8.2 Q7.6 7 9 7.8"/></g></svg></div>
<div class="rbtn" style="left:128px;top:655.2px"><svg width="18" height="18" viewBox="0 0 18 18"><path d="M3.8 9.3 L7.2 12.7 L14.3 5.6" fill="none" stroke="#222" stroke-width="1.6"/></svg></div>
<div class="rbtn" style="left:150px;top:655.2px"><svg width="18" height="18" viewBox="0 0 18 18"><circle cx="9" cy="9" r="5.4" fill="none" stroke="#222" stroke-width="1.3"/><circle cx="9" cy="9" r="2.8" fill="#222"/></svg></div>
<div class="abs" style="left:214px;top:654.2px;width:19.8px;height:19.6px;background:#fff;border:2px solid #cfcfe6;border-radius:1px"></div>
<div class="t bdn" style="right:1564.5px;top:658.3px">110705</div>
<div class="t bdc" style="left:346.8px;top:657.5999999999999px">SUBJECT 110705</div>
<div class="t bdn" style="right:1358.3px;top:658.3px">599</div>
<div class="t bd" style="left:553.4px;top:658.8px">PUR OF NON-RECOURSE RECEIV</div>
<div class="t bdn" style="right:1089.5px;top:658.3px">122339</div>
<div class="t bd" style="left:822px;top:658.8px">DELIBERATE</div>
<div class="t bd" style="left:902.6px;top:658.8px">EUR</div>
<div class="t bdn" style="right:866.7px;top:658.3px">2.000,00</div>
<div class="t bdn" style="right:286.79999999999995px;top:658.3px">1.000,00</div>
<div class="abs" style="left:271px;top:679px;width:1602px;height:31px;background:#f3f4f6"></div>
<div class="abs" style="left:101px;top:679px;width:170px;height:31px;background:#e7f2f4"></div>
<div class="abs" style="left:101px;top:710px;width:170px;height:1px;background:#fff"></div>
<div class="abs" style="left:341px;top:679px;width:1px;height:31px;background:#e9eaee"></div>
<div class="abs" style="left:447px;top:679px;width:1px;height:31px;background:#e9eaee"></div>
<div class="abs" style="left:547px;top:679px;width:1px;height:31px;background:#e9eaee"></div>
<div class="abs" style="left:746px;top:679px;width:1px;height:31px;background:#e9eaee"></div>
<div class="abs" style="left:816px;top:679px;width:1px;height:31px;background:#e9eaee"></div>
<div class="abs" style="left:896px;top:679px;width:1px;height:31px;background:#e9eaee"></div>
<div class="abs" style="left:966px;top:679px;width:1px;height:31px;background:#e9eaee"></div>
<div class="abs" style="left:1039px;top:679px;width:1px;height:31px;background:#e9eaee"></div>
<div class="abs" style="left:1107px;top:679px;width:1px;height:31px;background:#e9eaee"></div>
<div class="abs" style="left:1173px;top:679px;width:1px;height:31px;background:#e9eaee"></div>
<div class="abs" style="left:1246px;top:679px;width:1px;height:31px;background:#e9eaee"></div>
<div class="abs" style="left:1332px;top:679px;width:1px;height:31px;background:#e9eaee"></div>
<div class="abs" style="left:1439px;top:679px;width:1px;height:31px;background:#e9eaee"></div>
<div class="abs" style="left:1512px;top:679px;width:1px;height:31px;background:#e9eaee"></div>
<div class="abs" style="left:1619px;top:679px;width:1px;height:31px;background:#e9eaee"></div>
<div class="abs" style="left:1751px;top:679px;width:1px;height:31px;background:#e9eaee"></div>
<div class="abs" style="left:1828px;top:679px;width:1px;height:31px;background:#e9eaee"></div>
<div class="rbtn" style="left:106px;top:686.2px"><svg width="18" height="18" viewBox="0 0 18 18"><g fill="none" stroke="#222" stroke-width="1.4"><path d="M8.2 6.3 L10.3 4.2 Q12 2.6 13.7 4.3 Q15.4 6 13.8 7.7 L11.7 9.8 Q10.4 11 9 10.2"/><path d="M9.8 11.7 L7.7 13.8 Q6 15.4 4.3 13.7 Q2.6 12 4.2 10.3 L6.3 8.2 Q7.6 7 9 7.8"/></g></svg></div>
<div class="rbtn" style="left:128px;top:686.2px"><svg width="18" height="18" viewBox="0 0 18 18"><path d="M3.8 9.3 L7.2 12.7 L14.3 5.6" fill="none" stroke="#222" stroke-width="1.6"/></svg></div>
<div class="rbtn" style="left:150px;top:686.2px"><svg width="18" height="18" viewBox="0 0 18 18"><circle cx="9" cy="9" r="5.4" fill="none" stroke="#222" stroke-width="1.3"/><circle cx="9" cy="9" r="2.8" fill="#222"/></svg></div>
<div class="abs" style="left:214px;top:685.2px;width:19.8px;height:19.6px;background:#fff;border:2px solid #cfcfe6;border-radius:1px"></div>
<div class="t bdn" style="right:1564.5px;top:689.3px">139629</div>
<div class="t bdc" style="left:346.8px;top:688.5999999999999px">SUBJECT 139629</div>
<div class="t bdn" style="right:1358.3px;top:689.3px">599</div>
<div class="t bd" style="left:553.4px;top:689.8px">PUR OF NON-RECOURSE RECEIV</div>
<div class="t bdn" style="right:1089.5px;top:689.3px">152135</div>
<div class="t bd" style="left:822px;top:689.8px">DELIBERATE</div>
<div class="t bd" style="left:902.6px;top:689.8px">EUR</div>
<div class="t bdn" style="right:392.70000000000005px;top:689.3px">-23.635,07</div>
<div class="abs" style="left:271px;top:710px;width:1602px;height:31px;background:#fff"></div>
<div class="abs" style="left:101px;top:710px;width:170px;height:31px;background:#e7f2f4"></div>
<div class="abs" style="left:101px;top:741px;width:170px;height:1px;background:#fff"></div>
<div class="abs" style="left:341px;top:710px;width:1px;height:31px;background:#e9eaee"></div>
<div class="abs" style="left:447px;top:710px;width:1px;height:31px;background:#e9eaee"></div>
<div class="abs" style="left:547px;top:710px;width:1px;height:31px;background:#e9eaee"></div>
<div class="abs" style="left:746px;top:710px;width:1px;height:31px;background:#e9eaee"></div>
<div class="abs" style="left:816px;top:710px;width:1px;height:31px;background:#e9eaee"></div>
<div class="abs" style="left:896px;top:710px;width:1px;height:31px;background:#e9eaee"></div>
<div class="abs" style="left:966px;top:710px;width:1px;height:31px;background:#e9eaee"></div>
<div class="abs" style="left:1039px;top:710px;width:1px;height:31px;background:#e9eaee"></div>
<div class="abs" style="left:1107px;top:710px;width:1px;height:31px;background:#e9eaee"></div>
<div class="abs" style="left:1173px;top:710px;width:1px;height:31px;background:#e9eaee"></div>
<div class="abs" style="left:1246px;top:710px;width:1px;height:31px;background:#e9eaee"></div>
<div class="abs" style="left:1332px;top:710px;width:1px;height:31px;background:#e9eaee"></div>
<div class="abs" style="left:1439px;top:710px;width:1px;height:31px;background:#e9eaee"></div>
<div class="abs" style="left:1512px;top:710px;width:1px;height:31px;background:#e9eaee"></div>
<div class="abs" style="left:1619px;top:710px;width:1px;height:31px;background:#e9eaee"></div>
<div class="abs" style="left:1751px;top:710px;width:1px;height:31px;background:#e9eaee"></div>
<div class="abs" style="left:1828px;top:710px;width:1px;height:31px;background:#e9eaee"></div>
<div class="rbtn" style="left:106px;top:717.2px"><svg width="18" height="18" viewBox="0 0 18 18"><g fill="none" stroke="#222" stroke-width="1.4"><path d="M8.2 6.3 L10.3 4.2 Q12 2.6 13.7 4.3 Q15.4 6 13.8 7.7 L11.7 9.8 Q10.4 11 9 10.2"/><path d="M9.8 11.7 L7.7 13.8 Q6 15.4 4.3 13.7 Q2.6 12 4.2 10.3 L6.3 8.2 Q7.6 7 9 7.8"/></g></svg></div>
<div class="rbtn" style="left:128px;top:717.2px"><svg width="18" height="18" viewBox="0 0 18 18"><path d="M3.8 9.3 L7.2 12.7 L14.3 5.6" fill="none" stroke="#222" stroke-width="1.6"/></svg></div>
<div class="rbtn" style="left:150px;top:717.2px"><svg width="18" height="18" viewBox="0 0 18 18"><circle cx="9" cy="9" r="5.4" fill="none" stroke="#222" stroke-width="1.3"/><circle cx="9" cy="9" r="2.8" fill="#222"/></svg></div>
<div class="abs" style="left:214px;top:716.2px;width:19.8px;height:19.6px;background:#fff;border:2px solid #cfcfe6;border-radius:1px"></div>
<div class="t bdn" style="right:1564.5px;top:720.3px">27633</div>
<div class="t bdc" style="left:346.8px;top:719.5999999999999px">SUBJECT 27633</div>
<div class="t bdn" style="right:1358.3px;top:720.3px">199</div>
<div class="t bd" style="left:553.4px;top:720.8px">CRED PUR A TIT.DEF. NOT NOTF</div>
<div class="t bdn" style="right:1089.5px;top:720.3px">119723</div>
<div class="t bd" style="left:822px;top:720.8px">DELIBERATE</div>
<div class="t bd" style="left:902.6px;top:720.8px">EUR</div>
<div class="t bdn" style="right:392.70000000000005px;top:720.3px">-91.538,20</div>
<div class="abs" style="left:271px;top:741px;width:1602px;height:31px;background:#f3f4f6"></div>
<div class="abs" style="left:101px;top:741px;width:170px;height:31px;background:#e7f2f4"></div>
<div class="abs" style="left:101px;top:772px;width:170px;height:1px;background:#fff"></div>
<div class="abs" style="left:341px;top:741px;width:1px;height:31px;background:#e9eaee"></div>
<div class="abs" style="left:447px;top:741px;width:1px;height:31px;background:#e9eaee"></div>
<div class="abs" style="left:547px;top:741px;width:1px;height:31px;background:#e9eaee"></div>
<div class="abs" style="left:746px;top:741px;width:1px;height:31px;background:#e9eaee"></div>
<div class="abs" style="left:816px;top:741px;width:1px;height:31px;background:#e9eaee"></div>
<div class="abs" style="left:896px;top:741px;width:1px;height:31px;background:#e9eaee"></div>
<div class="abs" style="left:966px;top:741px;width:1px;height:31px;background:#e9eaee"></div>
<div class="abs" style="left:1039px;top:741px;width:1px;height:31px;background:#e9eaee"></div>
<div class="abs" style="left:1107px;top:741px;width:1px;height:31px;background:#e9eaee"></div>
<div class="abs" style="left:1173px;top:741px;width:1px;height:31px;background:#e9eaee"></div>
<div class="abs" style="left:1246px;top:741px;width:1px;height:31px;background:#e9eaee"></div>
<div class="abs" style="left:1332px;top:741px;width:1px;height:31px;background:#e9eaee"></div>
<div class="abs" style="left:1439px;top:741px;width:1px;height:31px;background:#e9eaee"></div>
<div class="abs" style="left:1512px;top:741px;width:1px;height:31px;background:#e9eaee"></div>
<div class="abs" style="left:1619px;top:741px;width:1px;height:31px;background:#e9eaee"></div>
<div class="abs" style="left:1751px;top:741px;width:1px;height:31px;background:#e9eaee"></div>
<div class="abs" style="left:1828px;top:741px;width:1px;height:31px;background:#e9eaee"></div>
<div class="rbtn" style="left:106px;top:748.2px"><svg width="18" height="18" viewBox="0 0 18 18"><g fill="none" stroke="#222" stroke-width="1.4"><path d="M8.2 6.3 L10.3 4.2 Q12 2.6 13.7 4.3 Q15.4 6 13.8 7.7 L11.7 9.8 Q10.4 11 9 10.2"/><path d="M9.8 11.7 L7.7 13.8 Q6 15.4 4.3 13.7 Q2.6 12 4.2 10.3 L6.3 8.2 Q7.6 7 9 7.8"/></g></svg></div>
<div class="rbtn" style="left:128px;top:748.2px"><svg width="18" height="18" viewBox="0 0 18 18"><path d="M3.8 9.3 L7.2 12.7 L14.3 5.6" fill="none" stroke="#222" stroke-width="1.6"/></svg></div>
<div class="rbtn" style="left:150px;top:748.2px"><svg width="18" height="18" viewBox="0 0 18 18"><circle cx="9" cy="9" r="5.4" fill="none" stroke="#222" stroke-width="1.3"/><circle cx="9" cy="9" r="2.8" fill="#222"/></svg></div>
<div class="abs" style="left:214px;top:747.2px;width:19.8px;height:19.6px;background:#fff;border:2px solid #cfcfe6;border-radius:1px"></div>
<div class="t bdn" style="right:1564.5px;top:751.3px">27633</div>
<div class="t bdc" style="left:346.8px;top:750.5999999999999px">SUBJECT 27633</div>
<div class="t bdn" style="right:1358.3px;top:751.3px">599</div>
<div class="t bd" style="left:553.4px;top:751.8px">PUR OF NON-RECOURSE RECEIV</div>
<div class="t bdn" style="right:1089.5px;top:751.3px">118925</div>
<div class="t bd" style="left:822px;top:751.8px">DELIBERATE</div>
<div class="t bd" style="left:902.6px;top:751.8px">EUR</div>
<div class="t bdn" style="right:866.7px;top:751.3px">3.000,00</div>
<div class="abs" style="left:271px;top:772px;width:1602px;height:31px;background:#fff"></div>
<div class="abs" style="left:101px;top:772px;width:170px;height:31px;background:#e7f2f4"></div>
<div class="abs" style="left:101px;top:803px;width:170px;height:1px;background:#fff"></div>
<div class="abs" style="left:341px;top:772px;width:1px;height:31px;background:#e9eaee"></div>
<div class="abs" style="left:447px;top:772px;width:1px;height:31px;background:#e9eaee"></div>
<div class="abs" style="left:547px;top:772px;width:1px;height:31px;background:#e9eaee"></div>
<div class="abs" style="left:746px;top:772px;width:1px;height:31px;background:#e9eaee"></div>
<div class="abs" style="left:816px;top:772px;width:1px;height:31px;background:#e9eaee"></div>
<div class="abs" style="left:896px;top:772px;width:1px;height:31px;background:#e9eaee"></div>
<div class="abs" style="left:966px;top:772px;width:1px;height:31px;background:#e9eaee"></div>
<div class="abs" style="left:1039px;top:772px;width:1px;height:31px;background:#e9eaee"></div>
<div class="abs" style="left:1107px;top:772px;width:1px;height:31px;background:#e9eaee"></div>
<div class="abs" style="left:1173px;top:772px;width:1px;height:31px;background:#e9eaee"></div>
<div class="abs" style="left:1246px;top:772px;width:1px;height:31px;background:#e9eaee"></div>
<div class="abs" style="left:1332px;top:772px;width:1px;height:31px;background:#e9eaee"></div>
<div class="abs" style="left:1439px;top:772px;width:1px;height:31px;background:#e9eaee"></div>
<div class="abs" style="left:1512px;top:772px;width:1px;height:31px;background:#e9eaee"></div>
<div class="abs" style="left:1619px;top:772px;width:1px;height:31px;background:#e9eaee"></div>
<div class="abs" style="left:1751px;top:772px;width:1px;height:31px;background:#e9eaee"></div>
<div class="abs" style="left:1828px;top:772px;width:1px;height:31px;background:#e9eaee"></div>
<div class="rbtn" style="left:106px;top:779.2px"><svg width="18" height="18" viewBox="0 0 18 18"><g fill="none" stroke="#222" stroke-width="1.4"><path d="M8.2 6.3 L10.3 4.2 Q12 2.6 13.7 4.3 Q15.4 6 13.8 7.7 L11.7 9.8 Q10.4 11 9 10.2"/><path d="M9.8 11.7 L7.7 13.8 Q6 15.4 4.3 13.7 Q2.6 12 4.2 10.3 L6.3 8.2 Q7.6 7 9 7.8"/></g></svg></div>
<div class="rbtn" style="left:128px;top:779.2px"><svg width="18" height="18" viewBox="0 0 18 18"><path d="M3.8 9.3 L7.2 12.7 L14.3 5.6" fill="none" stroke="#222" stroke-width="1.6"/></svg></div>
<div class="rbtn" style="left:150px;top:779.2px"><svg width="18" height="18" viewBox="0 0 18 18"><circle cx="9" cy="9" r="5.4" fill="none" stroke="#222" stroke-width="1.3"/><circle cx="9" cy="9" r="2.8" fill="#222"/></svg></div>
<div class="abs" style="left:214px;top:778.2px;width:19.8px;height:19.6px;background:#fff;border:2px solid #cfcfe6;border-radius:1px"></div>
<div class="t bdn" style="right:1564.5px;top:782.3px">40228</div>
<div class="t bdc" style="left:346.8px;top:781.5999999999999px">SUBJECT 40228</div>
<div class="t bdn" style="right:1358.3px;top:782.3px">571</div>
<div class="t bd" style="left:553.4px;top:782.8px">CRED ADV WITHOUT REC PRIV.CO</div>
<div class="t bdn" style="right:1089.5px;top:782.3px">103955</div>
<div class="t bd" style="left:822px;top:782.8px">DELIBERATE</div>
<div class="t bd" style="left:902.6px;top:782.8px">EUR</div>
<div class="t bdn" style="right:866.7px;top:782.3px">142.379,39</div>
<div class="t bdn" style="right:573.8px;top:782.3px">142.379,39</div>
<div class="abs" style="left:271px;top:803px;width:1602px;height:31px;background:#f3f4f6"></div>
<div class="abs" style="left:101px;top:803px;width:170px;height:31px;background:#e7f2f4"></div>
<div class="abs" style="left:101px;top:834px;width:170px;height:1px;background:#fff"></div>
<div class="abs" style="left:341px;top:803px;width:1px;height:31px;background:#e9eaee"></div>
<div class="abs" style="left:447px;top:803px;width:1px;height:31px;background:#e9eaee"></div>
<div class="abs" style="left:547px;top:803px;width:1px;height:31px;background:#e9eaee"></div>
<div class="abs" style="left:746px;top:803px;width:1px;height:31px;background:#e9eaee"></div>
<div class="abs" style="left:816px;top:803px;width:1px;height:31px;background:#e9eaee"></div>
<div class="abs" style="left:896px;top:803px;width:1px;height:31px;background:#e9eaee"></div>
<div class="abs" style="left:966px;top:803px;width:1px;height:31px;background:#e9eaee"></div>
<div class="abs" style="left:1039px;top:803px;width:1px;height:31px;background:#e9eaee"></div>
<div class="abs" style="left:1107px;top:803px;width:1px;height:31px;background:#e9eaee"></div>
<div class="abs" style="left:1173px;top:803px;width:1px;height:31px;background:#e9eaee"></div>
<div class="abs" style="left:1246px;top:803px;width:1px;height:31px;background:#e9eaee"></div>
<div class="abs" style="left:1332px;top:803px;width:1px;height:31px;background:#e9eaee"></div>
<div class="abs" style="left:1439px;top:803px;width:1px;height:31px;background:#e9eaee"></div>
<div class="abs" style="left:1512px;top:803px;width:1px;height:31px;background:#e9eaee"></div>
<div class="abs" style="left:1619px;top:803px;width:1px;height:31px;background:#e9eaee"></div>
<div class="abs" style="left:1751px;top:803px;width:1px;height:31px;background:#e9eaee"></div>
<div class="abs" style="left:1828px;top:803px;width:1px;height:31px;background:#e9eaee"></div>
<div class="rbtn" style="left:106px;top:810.2px"><svg width="18" height="18" viewBox="0 0 18 18"><g fill="none" stroke="#222" stroke-width="1.4"><path d="M8.2 6.3 L10.3 4.2 Q12 2.6 13.7 4.3 Q15.4 6 13.8 7.7 L11.7 9.8 Q10.4 11 9 10.2"/><path d="M9.8 11.7 L7.7 13.8 Q6 15.4 4.3 13.7 Q2.6 12 4.2 10.3 L6.3 8.2 Q7.6 7 9 7.8"/></g></svg></div>
<div class="rbtn" style="left:128px;top:810.2px"><svg width="18" height="18" viewBox="0 0 18 18"><path d="M3.8 9.3 L7.2 12.7 L14.3 5.6" fill="none" stroke="#222" stroke-width="1.6"/></svg></div>
<div class="rbtn" style="left:150px;top:810.2px"><svg width="18" height="18" viewBox="0 0 18 18"><circle cx="9" cy="9" r="5.4" fill="none" stroke="#222" stroke-width="1.3"/><circle cx="9" cy="9" r="2.8" fill="#222"/></svg></div>
<div class="abs" style="left:214px;top:809.2px;width:19.8px;height:19.6px;background:#fff;border:2px solid #cfcfe6;border-radius:1px"></div>
<div class="t bdn" style="right:1564.5px;top:813.3px">40228</div>
<div class="t bdc" style="left:346.8px;top:812.5999999999999px">SUBJECT 40228</div>
<div class="t bdn" style="right:1358.3px;top:813.3px">593</div>
<div class="t bd" style="left:553.4px;top:813.8px">DIGITAL FACTORING</div>
<div class="t bdn" style="right:1089.5px;top:813.3px">152144</div>
<div class="t bd" style="left:822px;top:813.8px">DELIBERATE</div>
<div class="t bd" style="left:902.6px;top:813.8px">EUR</div>
<div class="t bdn" style="right:392.70000000000005px;top:813.3px">-1.941,84</div>
<div class="abs" style="left:271px;top:834px;width:1602px;height:31px;background:#fff"></div>
<div class="abs" style="left:101px;top:834px;width:170px;height:31px;background:#e7f2f4"></div>
<div class="abs" style="left:101px;top:865px;width:170px;height:1px;background:#fff"></div>
<div class="abs" style="left:341px;top:834px;width:1px;height:31px;background:#e9eaee"></div>
<div class="abs" style="left:447px;top:834px;width:1px;height:31px;background:#e9eaee"></div>
<div class="abs" style="left:547px;top:834px;width:1px;height:31px;background:#e9eaee"></div>
<div class="abs" style="left:746px;top:834px;width:1px;height:31px;background:#e9eaee"></div>
<div class="abs" style="left:816px;top:834px;width:1px;height:31px;background:#e9eaee"></div>
<div class="abs" style="left:896px;top:834px;width:1px;height:31px;background:#e9eaee"></div>
<div class="abs" style="left:966px;top:834px;width:1px;height:31px;background:#e9eaee"></div>
<div class="abs" style="left:1039px;top:834px;width:1px;height:31px;background:#e9eaee"></div>
<div class="abs" style="left:1107px;top:834px;width:1px;height:31px;background:#e9eaee"></div>
<div class="abs" style="left:1173px;top:834px;width:1px;height:31px;background:#e9eaee"></div>
<div class="abs" style="left:1246px;top:834px;width:1px;height:31px;background:#e9eaee"></div>
<div class="abs" style="left:1332px;top:834px;width:1px;height:31px;background:#e9eaee"></div>
<div class="abs" style="left:1439px;top:834px;width:1px;height:31px;background:#e9eaee"></div>
<div class="abs" style="left:1512px;top:834px;width:1px;height:31px;background:#e9eaee"></div>
<div class="abs" style="left:1619px;top:834px;width:1px;height:31px;background:#e9eaee"></div>
<div class="abs" style="left:1751px;top:834px;width:1px;height:31px;background:#e9eaee"></div>
<div class="abs" style="left:1828px;top:834px;width:1px;height:31px;background:#e9eaee"></div>
<div class="rbtn" style="left:106px;top:841.2px"><svg width="18" height="18" viewBox="0 0 18 18"><g fill="none" stroke="#222" stroke-width="1.4"><path d="M8.2 6.3 L10.3 4.2 Q12 2.6 13.7 4.3 Q15.4 6 13.8 7.7 L11.7 9.8 Q10.4 11 9 10.2"/><path d="M9.8 11.7 L7.7 13.8 Q6 15.4 4.3 13.7 Q2.6 12 4.2 10.3 L6.3 8.2 Q7.6 7 9 7.8"/></g></svg></div>
<div class="rbtn" style="left:128px;top:841.2px"><svg width="18" height="18" viewBox="0 0 18 18"><path d="M3.8 9.3 L7.2 12.7 L14.3 5.6" fill="none" stroke="#222" stroke-width="1.6"/></svg></div>
<div class="rbtn" style="left:150px;top:841.2px"><svg width="18" height="18" viewBox="0 0 18 18"><circle cx="9" cy="9" r="5.4" fill="none" stroke="#222" stroke-width="1.3"/><circle cx="9" cy="9" r="2.8" fill="#222"/></svg></div>
<div class="abs" style="left:214px;top:840.2px;width:19.8px;height:19.6px;background:#fff;border:2px solid #cfcfe6;border-radius:1px"></div>
<div class="t bdn" style="right:1564.5px;top:844.3px">40228</div>
<div class="t bdc" style="left:346.8px;top:843.5999999999999px">SUBJECT 40228</div>
<div class="t bdn" style="right:1358.3px;top:844.3px">599</div>
<div class="t bd" style="left:553.4px;top:844.8px">PUR OF NON-RECOURSE RECEIV</div>
<div class="t bdn" style="right:1089.5px;top:844.3px">152346</div>
<div class="t bd" style="left:822px;top:844.8px">DELIBERATE</div>
<div class="t bd" style="left:902.6px;top:844.8px">EUR</div>
<div class="t bdn" style="right:866.7px;top:844.3px">50.000,00</div>
<div class="abs" style="left:271px;top:865px;width:1602px;height:31px;background:#f3f4f6"></div>
<div class="abs" style="left:101px;top:865px;width:170px;height:31px;background:#e7f2f4"></div>
<div class="abs" style="left:101px;top:896px;width:170px;height:1px;background:#fff"></div>
<div class="abs" style="left:341px;top:865px;width:1px;height:31px;background:#e9eaee"></div>
<div class="abs" style="left:447px;top:865px;width:1px;height:31px;background:#e9eaee"></div>
<div class="abs" style="left:547px;top:865px;width:1px;height:31px;background:#e9eaee"></div>
<div class="abs" style="left:746px;top:865px;width:1px;height:31px;background:#e9eaee"></div>
<div class="abs" style="left:816px;top:865px;width:1px;height:31px;background:#e9eaee"></div>
<div class="abs" style="left:896px;top:865px;width:1px;height:31px;background:#e9eaee"></div>
<div class="abs" style="left:966px;top:865px;width:1px;height:31px;background:#e9eaee"></div>
<div class="abs" style="left:1039px;top:865px;width:1px;height:31px;background:#e9eaee"></div>
<div class="abs" style="left:1107px;top:865px;width:1px;height:31px;background:#e9eaee"></div>
<div class="abs" style="left:1173px;top:865px;width:1px;height:31px;background:#e9eaee"></div>
<div class="abs" style="left:1246px;top:865px;width:1px;height:31px;background:#e9eaee"></div>
<div class="abs" style="left:1332px;top:865px;width:1px;height:31px;background:#e9eaee"></div>
<div class="abs" style="left:1439px;top:865px;width:1px;height:31px;background:#e9eaee"></div>
<div class="abs" style="left:1512px;top:865px;width:1px;height:31px;background:#e9eaee"></div>
<div class="abs" style="left:1619px;top:865px;width:1px;height:31px;background:#e9eaee"></div>
<div class="abs" style="left:1751px;top:865px;width:1px;height:31px;background:#e9eaee"></div>
<div class="abs" style="left:1828px;top:865px;width:1px;height:31px;background:#e9eaee"></div>
<div class="rbtn" style="left:106px;top:872.2px"><svg width="18" height="18" viewBox="0 0 18 18"><g fill="none" stroke="#222" stroke-width="1.4"><path d="M8.2 6.3 L10.3 4.2 Q12 2.6 13.7 4.3 Q15.4 6 13.8 7.7 L11.7 9.8 Q10.4 11 9 10.2"/><path d="M9.8 11.7 L7.7 13.8 Q6 15.4 4.3 13.7 Q2.6 12 4.2 10.3 L6.3 8.2 Q7.6 7 9 7.8"/></g></svg></div>
<div class="rbtn" style="left:128px;top:872.2px"><svg width="18" height="18" viewBox="0 0 18 18"><path d="M3.8 9.3 L7.2 12.7 L14.3 5.6" fill="none" stroke="#222" stroke-width="1.6"/></svg></div>
<div class="rbtn" style="left:150px;top:872.2px"><svg width="18" height="18" viewBox="0 0 18 18"><circle cx="9" cy="9" r="5.4" fill="none" stroke="#222" stroke-width="1.3"/><circle cx="9" cy="9" r="2.8" fill="#222"/></svg></div>
<div class="abs" style="left:214px;top:871.2px;width:19.8px;height:19.6px;background:#fff;border:2px solid #cfcfe6;border-radius:1px"></div>
<div class="t bdn" style="right:1564.5px;top:875.3px"></div>
<div class="t bdc" style="left:346.8px;top:874.5999999999999px"></div>
<div class="t bdn" style="right:1358.3px;top:875.3px"></div>
<div class="t bd" style="left:553.4px;top:875.8px"></div>
<div class="t bdn" style="right:1089.5px;top:875.3px"></div>
<div class="t bd" style="left:822px;top:875.8px">DELIBERATE</div>
<div class="t bd" style="left:902.6px;top:875.8px">EUR</div>
<!--/BOTTOM-->
</body></html>
